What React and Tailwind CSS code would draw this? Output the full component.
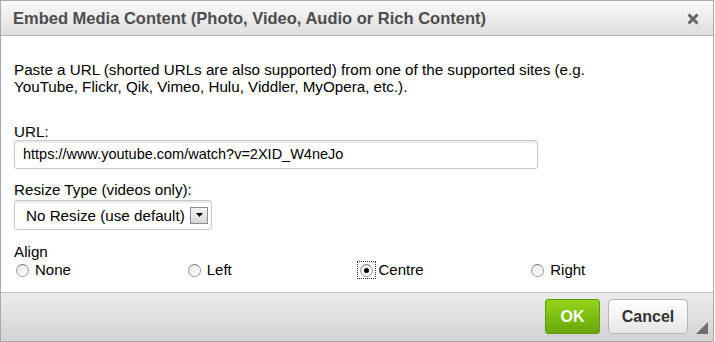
import React from "react";

function Radio({ checked, label, focused }) {
  return (
    <label className="flex items-center h-[18px]">
      <span className={"flex items-center justify-center w-[19px] h-[18px] " + (focused ? "outline outline-1 outline-dotted outline-[#333] -outline-offset-1" : "")}>
        <span className="w-[13px] h-[13px] rounded-full border border-[#9a9a9a] border-t-[#7d7d7d] bg-gradient-to-br from-[#e8e8e8] to-white flex items-center justify-center">
          {checked && <span className="w-[5px] h-[5px] rounded-full bg-black" />}
        </span>
      </span>
      <span className="ml-[3px] text-[15px] leading-[18px] text-black">{label}</span>
    </label>
  );
}

export default function App() {
  return (
    <div className="w-[714px] h-[342px] bg-white border border-[#a9a9a9] flex flex-col overflow-hidden" style={{ fontFamily: '"Liberation Sans", Arial, sans-serif' }}>
      <div className="h-[35px] shrink-0 flex items-center justify-between pl-[12px] pr-[14px] bg-gradient-to-b from-[#fafafa] to-[#dedede] border-b border-[#b3b3b3]">
        <span className="text-[16.5px] font-bold text-[#4d4d4d]">Embed Media Content (Photo, Video, Audio or Rich Content)</span>
        <svg width="12" height="12" viewBox="0 0 12 12" className="mt-[1px]">
          <path d="M1.5 1.5 L10.5 10.5 M10.5 1.5 L1.5 10.5" stroke="#666" strokeWidth="3" strokeLinecap="butt" />
        </svg>
      </div>
      <div className="flex-1 px-[13px] pt-[25px] text-[15.2px] leading-[17px] text-black">
        <p>Paste a URL (shorted URLs are also supported) from one of the supported sites (e.g.<br />YouTube, Flickr, Qik, Vimeo, Hulu, Viddler, MyOpera, etc.).</p>
        <div className="mt-[29px] leading-[16px]">URL:</div>
        <div className="w-[524px] h-[29px] rounded-[3px] border border-[#c8c8c8] shadow-[inset_0_2px_1px_rgba(0,0,0,0.08)] flex items-center pl-[8px] text-[14.5px]">
          https://www.youtube.com/watch?v=2XID_W4neJo
        </div>
        <div className="mt-[13px] leading-[16px]">Resize Type (videos only):</div>
        <div className="mt-[2px] w-[198px] h-[30px] rounded-[3px] border border-[#c8c8c8] shadow-[inset_0_2px_1px_rgba(0,0,0,0.08)] flex items-center pl-[11px] pr-[3px] justify-between">
          <span>No Resize (use default)</span>
          <span className="w-[18px] h-[17px] border border-[#8a8a8a] bg-gradient-to-b from-[#f4f4f4] to-[#d8d8d8] flex items-center justify-center">
            <svg width="7" height="4" viewBox="0 0 7 4"><path d="M0 0 L7 0 L3.5 4 Z" fill="#000" /></svg>
          </span>
        </div>
        <div className="mt-[14px] leading-[16px]">Align</div>
        <div className="grid grid-cols-4 mt-[1px] -ml-[1px]">
          <Radio label="None" />
          <Radio label="Left" />
          <Radio label="Centre" checked focused />
          <Radio label="Right" />
        </div>
      </div>
      <div className="h-[49px] shrink-0 border-t border-[#bdbdbd] bg-gradient-to-b from-[#ececec] to-[#d2d2d2] flex items-start justify-end pt-[6px] pr-[25px] relative">
        <button className="w-[55px] h-[35px] rounded-[3px] border border-[#5f9b0c] bg-gradient-to-b from-[#93d51a] to-[#68a80a] text-white font-bold text-[16px]">OK</button>
        <button className="ml-[8px] w-[80px] h-[35px] rounded-[4px] border border-[#b5b5b5] bg-gradient-to-b from-white to-[#e6e6e6] text-[#333] font-bold text-[16px]">Cancel</button>
        <svg width="12" height="12" viewBox="0 0 12 12" className="absolute right-[5px] bottom-[7px]">
          <path d="M12 0 L12 12 L0 12 Z" fill="#6d6d6d" />
        </svg>
      </div>
    </div>
  );
}
